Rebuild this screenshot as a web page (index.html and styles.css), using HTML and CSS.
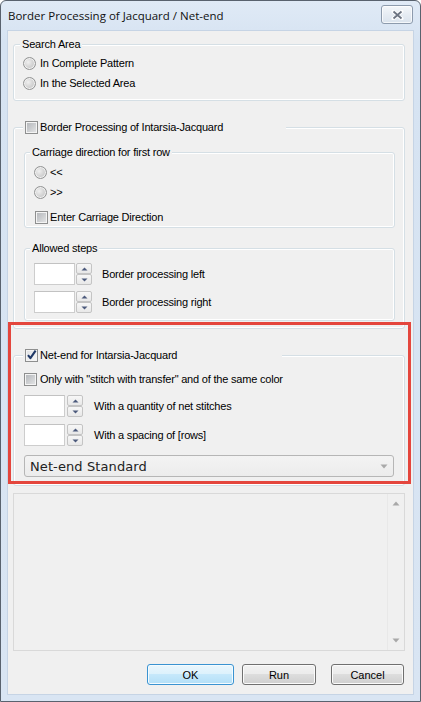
FILE: index.html
```html
<!DOCTYPE html>
<html>
<head>
<meta charset="utf-8">
<link rel="stylesheet" href="styles.css">
</head>
<body>
<div class="window">
  <div class="titlebar">
    <span class="title">Border Processing of Jacquard / Net-end</span>
    <div class="close">
      <svg width="13" height="10" viewBox="0 0 13 10"><path d="M2.5 1.5 L10.5 8.5 M10.5 1.5 L2.5 8.5" stroke="#fbfcfd" stroke-width="4" stroke-linecap="round"/><path d="M2.5 1.5 L10.5 8.5 M10.5 1.5 L2.5 8.5" stroke="#6c7482" stroke-width="1.8"/></svg>
    </div>
  </div>
  <div class="client">
    <div class="group top g-search">
      <div class="legend">Search Area</div>
      <div class="opt first"><span class="radio"></span><span>In Complete Pattern</span></div>
      <div class="opt"><span class="radio"></span><span>In the Selected Area</span></div>
    </div>

    <div class="group top g-intarsia">
      <div class="legend chk w263"><span class="check"></span><span>Border Processing of Intarsia-Jacquard</span></div>
      <div class="group sub g-carriage">
        <div class="legend sublegend">Carriage direction for first row</div>
        <div class="opt first"><span class="radio"></span><span>&lt;&lt;</span></div>
        <div class="opt"><span class="radio"></span><span>&gt;&gt;</span></div>
        <div class="opt last"><span class="check"></span><span>Enter Carriage Direction</span></div>
      </div>
      <div class="group sub g-steps">
        <div class="legend sublegend">Allowed steps</div>
        <div class="spin first">
          <div class="tb"></div>
          <div class="updown">
            <div class="ud"><svg width="7" height="4" viewBox="0 0 7 4"><path d="M0.5 3.5 L3.5 0.5 L6.5 3.5 Z" fill="#4c5a7c"/></svg></div>
            <div class="ud"><svg width="7" height="4" viewBox="0 0 7 4"><path d="M0.5 0.5 L3.5 3.5 L6.5 0.5 Z" fill="#4c5a7c"/></svg></div>
          </div>
          <span class="spinlabel">Border processing left</span>
        </div>
        <div class="spin second">
          <div class="tb"></div>
          <div class="updown">
            <div class="ud"><svg width="7" height="4" viewBox="0 0 7 4"><path d="M0.5 3.5 L3.5 0.5 L6.5 3.5 Z" fill="#4c5a7c"/></svg></div>
            <div class="ud"><svg width="7" height="4" viewBox="0 0 7 4"><path d="M0.5 0.5 L3.5 3.5 L6.5 0.5 Z" fill="#4c5a7c"/></svg></div>
          </div>
          <span class="spinlabel">Border processing right</span>
        </div>
      </div>
    </div>

    <div class="group top g-net">
      <div class="legend chk w259"><span class="check checked"><svg width="13" height="13" viewBox="0 0 13 13"><path d="M3 6.2 L5.4 9.2 L10.6 1.6" fill="none" stroke="#1f3867" stroke-width="2.1" stroke-linejoin="round"/></svg></span><span>Net-end for Intarsia-Jacquard</span></div>
      <div class="opt first"><span class="check"></span><span>Only with "stitch with transfer" and of the same color</span></div>
      <div class="spin first">
        <div class="tb"></div>
        <div class="updown">
          <div class="ud"><svg width="7" height="4" viewBox="0 0 7 4"><path d="M0.5 3.5 L3.5 0.5 L6.5 3.5 Z" fill="#4c5a7c"/></svg></div>
          <div class="ud"><svg width="7" height="4" viewBox="0 0 7 4"><path d="M0.5 0.5 L3.5 3.5 L6.5 0.5 Z" fill="#4c5a7c"/></svg></div>
        </div>
        <span class="spinlabel">With a quantity of net stitches</span>
      </div>
      <div class="spin second">
        <div class="tb"></div>
        <div class="updown">
          <div class="ud"><svg width="7" height="4" viewBox="0 0 7 4"><path d="M0.5 3.5 L3.5 0.5 L6.5 3.5 Z" fill="#4c5a7c"/></svg></div>
          <div class="ud"><svg width="7" height="4" viewBox="0 0 7 4"><path d="M0.5 0.5 L3.5 3.5 L6.5 0.5 Z" fill="#4c5a7c"/></svg></div>
        </div>
        <span class="spinlabel">With a spacing of [rows]</span>
      </div>
      <div class="combo">
        <span>Net-end Standard</span>
        <svg width="8" height="5" viewBox="0 0 8 5"><path d="M0.5 0.5 L4 4.5 L7.5 0.5 Z" fill="#a9a9a9"/></svg>
      </div>
    </div>

    <div class="memo">
      <div class="vscroll">
        <svg width="8" height="5" viewBox="0 0 8 5"><path d="M0.5 4.5 L4 0.5 L7.5 4.5 Z" fill="#a8a8a8"/></svg>
        <svg width="8" height="5" viewBox="0 0 8 5"><path d="M0.5 0.5 L4 4.5 L7.5 0.5 Z" fill="#a8a8a8"/></svg>
      </div>
    </div>

    <div class="btns">
      <div class="btn ok">OK</div>
      <div class="btn run">Run</div>
      <div class="btn cancel">Cancel</div>
    </div>
  </div>
  <div class="highlight"></div>
</div>
</body>
</html>
```
FILE: styles.css
```css
* { box-sizing: border-box; }
html, body { margin: 0; padding: 0; }
body {
  width: 421px;
  height: 702px;
  overflow: hidden;
  background: #ffffff;
  font-family: "Liberation Sans", Arial, sans-serif;
  font-size: 11px;
  letter-spacing: -0.2px;
  color: #000;
}
.window {
  position: relative;
  width: 421px;
  height: 702px;
  border: 1px solid #59626e;
  border-radius: 6px 6px 0 0;
  background: linear-gradient(#e0eaf6, #d6e3f2 40px, #d9e5f3);
  padding: 0 7px 7px 7px;
  display: flex;
  flex-direction: column;
}
.titlebar {
  height: 30px;
  flex: none;
  display: flex;
  align-items: center;
  justify-content: space-between;
}
.title {
  font-family: "Open Sans", "Noto Sans", sans-serif;
  font-size: 11.5px;
  letter-spacing: 0;
  color: #111;
  padding-bottom: 1px;
}
.close {
  align-self: flex-start;
  margin-top: 4px;
  width: 32px;
  height: 19px;
  border: 1px solid #8d9bad;
  border-radius: 3px;
  background: linear-gradient(#f4f7fa, #e6ecf3 50%, #dae3ed);
  box-shadow: inset 0 0 0 1px rgba(255,255,255,0.7);
  display: flex;
  align-items: center;
  justify-content: center;
}
.client {
  height: 663px;
  flex: none;
  background: #f0f0f0;
  box-shadow: 0 0 0 1px #c6d4e5;
  display: flex;
  flex-direction: column;
}
.group {
  border: 1px solid #d5dfe5;
  border-radius: 3px;
  box-shadow: inset 0 0 0 1px #ffffff;
}
.group.top { margin: 26px 8px 0 5px; }
.group.top.g-search { margin-top: 13px; padding-bottom: 7px; }
.g-intarsia { padding-bottom: 7px; }
.g-net { padding-bottom: 8px; }
.group.sub { margin: 0 9px 0 10px; }
.g-carriage { margin-top: 18px !important; }
.g-steps { margin-top: 20px !important; padding-bottom: 7px; }

.legend {
  width: fit-content;
  height: 13px;
  line-height: 13px;
  margin: -7px 0 0 6px;
  padding: 0 2px;
  background: #f0f0f0;
  white-space: nowrap;
}
.legend.sublegend { margin-left: 5px; }
.legend.chk {
  display: flex;
  align-items: center;
  gap: 2px;
  margin-left: 9px;
  padding-left: 2px;
}
.w263 { width: 263px; }
.w259 { width: 259px; }

.opt {
  height: 20px;
  display: flex;
  align-items: center;
  gap: 4px;
  padding-left: 9px;
  white-space: nowrap;
}
.g-search .opt.first { margin-top: 2px; }
.g-carriage .opt { gap: 3px; }
.g-carriage .opt.first { margin-top: 3px; }
.g-carriage .opt.last { margin-top: 5px; padding-left: 10px; }
.g-carriage .opt.last { gap: 2px; }
.g-net .opt { padding-left: 10px; gap: 3px; }
.g-net .opt.first { margin-top: 7px; }

.radio {
  flex: none;
  width: 13px;
  height: 13px;
  border-radius: 50%;
  border: 1px solid #939494;
  background: radial-gradient(circle at 38% 38%, #f0f0f0 0, #d6d6d6 45%, #bcbdbe 100%);
  box-shadow: inset 0 0 0 1px #f1f1f1;
}
.check {
  flex: none;
  width: 13px;
  height: 13px;
  border: 1px solid #8e8f8f;
  background: linear-gradient(135deg, #b1b4b8, #e6e7e8);
  box-shadow: inset 0 0 0 1px #f4f4f4;
  position: relative;
}
.check.checked {
  background: linear-gradient(135deg, #dfe1e4, #f7f7f7);
}
.check.checked svg {
  position: absolute;
  left: -1px;
  top: -1px;
}

.spin {
  height: 22px;
  display: flex;
  align-items: center;
  padding-left: 9px;
}
.spin.first { margin-top: 8px; }
.spin.second { margin-top: 6px; }
.g-net .spin { padding-left: 10px; }
.g-net .spin.first { margin-top: 6px; }
.g-net .spin.second { margin-top: 7px; }
.tb {
  width: 41px;
  height: 22px;
  background: #ffffff;
  border: 1px solid #cdcdcd;
  border-top-color: #c2c2c2;
}
.updown {
  width: 16px;
  height: 22px;
  margin-left: 1px;
  display: flex;
  flex-direction: column;
}
.g-net .updown { margin-left: 2px; }
.ud {
  height: 11px;
  border: 1px solid #c4c4c4;
  border-radius: 2px;
  background: linear-gradient(#f7f7f7, #e8e8e8);
  display: flex;
  align-items: center;
  justify-content: center;
}
.spinlabel { margin-left: 10px; white-space: nowrap; }
.g-net .spinlabel { margin-left: 11px; }

.combo {
  height: 22px;
  margin: 9px 10px 0 10px;
  border: 1px solid #b6b6b6;
  border-radius: 3px;
  background: linear-gradient(#f3f3f3, #ececec);
  display: flex;
  align-items: center;
  justify-content: space-between;
  padding: 0 5px 0 5px;
  font-family: "DejaVu Sans", Verdana, sans-serif;
  font-size: 13px;
  letter-spacing: 0.1px;
  color: #222;
}

.memo {
  margin: 7px 8px 0 5px;
  height: 158px;
  border: 1px solid #d9d9d9;
  background: #f0f0f0;
  display: flex;
  justify-content: flex-end;
}
.vscroll {
  width: 17px;
  border-left: 1px solid #e8e8e8;
  display: flex;
  flex-direction: column;
  justify-content: space-between;
  align-items: center;
  padding: 7px 0 7px 0;
}

.btns {
  display: flex;
  justify-content: flex-end;
  margin-top: 13px;
  padding-right: 9px;
}
.btn {
  height: 21px;
  border: 1px solid #707070;
  border-radius: 3px;
  background: linear-gradient(#f2f2f2 0, #ebebeb 50%, #dddddd 50%, #cfcfcf 100%);
  box-shadow: inset 0 0 0 1px #fbfbfb;
  display: flex;
  align-items: center;
  justify-content: center;
  letter-spacing: 0;
}
.ok {
  width: 87px;
  border-color: #3a93d1;
  background: linear-gradient(#eaf6fd 0, #dcf1fc 50%, #c6e8fb 50%, #b3dff7 100%);
  box-shadow: inset 0 0 0 1px #f4fbff;
}
.run { width: 74px; margin-left: 8px; }
.cancel { width: 73px; margin-left: 15px; }

.highlight {
  position: absolute;
  left: 7px;
  top: 321px;
  width: 403px;
  height: 162px;
  border: 3px solid #e4463d;
}
```
